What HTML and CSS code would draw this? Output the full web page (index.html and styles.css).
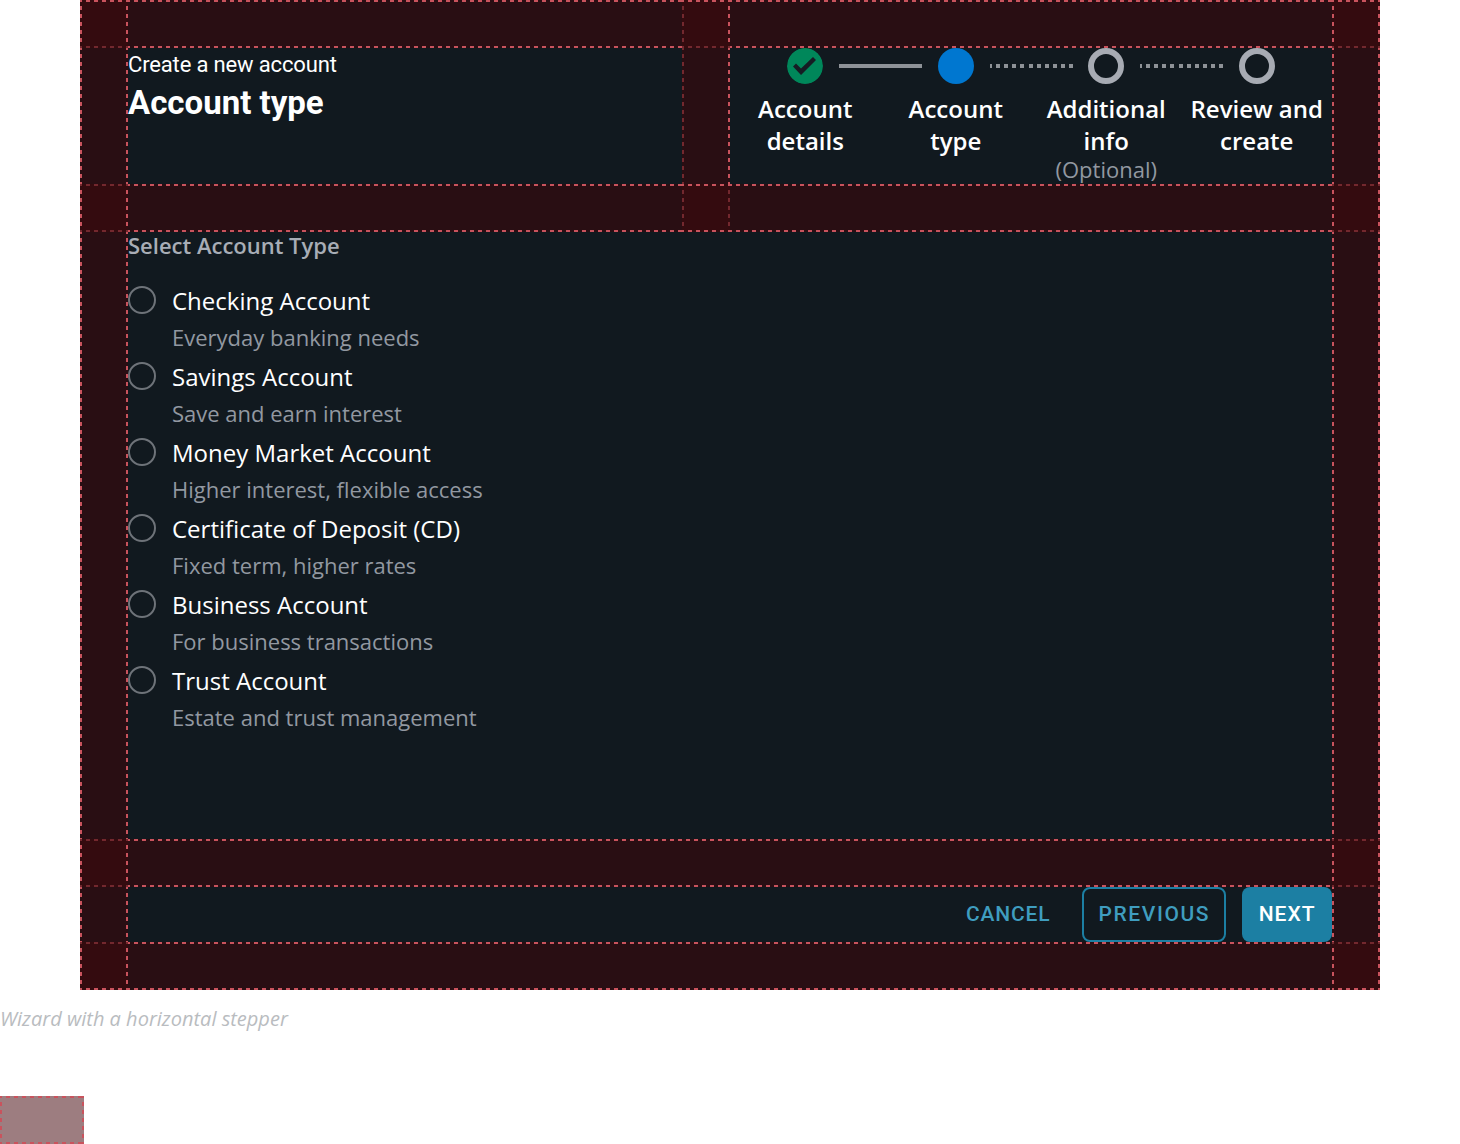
FILE: index.html
```html
<!DOCTYPE html>
<html lang="en">
<head>
<meta charset="utf-8">
<title>Wizard with a horizontal stepper</title>
<link rel="stylesheet" href="styles.css">
</head>
<body>
<figure class="specimen">
  <div class="wizard">
    <div class="corner dim-b"></div><div class="hband"></div><div class="corner dim-b dim-l"></div><div class="hband"></div><div class="corner dim-b"></div>

    <div class="vband"></div>
    <header class="cell heading">
      <p class="eyebrow">Create a new account</p>
      <h1 class="title">Account type</h1>
    </header>
    <div class="vband dim-l"></div>
    <ol class="cell stepper">
      <li class="step">
        <div class="track">
          <svg class="node" viewBox="0 0 36 36"><circle cx="18" cy="18" r="18" fill="#00875a"/><path d="M6 18.5l3-3 5 5L26 9l3 3L14 27z" fill="#161c24"/></svg>
          <span class="line solid"></span>
        </div>
        <span class="label">Account details</span>
      </li>
      <li class="step">
        <div class="track">
          <span class="node current"></span>
          <span class="line dotted"></span>
        </div>
        <span class="label">Account type</span>
      </li>
      <li class="step">
        <div class="track">
          <span class="node todo"></span>
          <span class="line dotted"></span>
        </div>
        <span class="label">Additional info</span>
        <span class="hint">(Optional)</span>
      </li>
      <li class="step">
        <div class="track">
          <span class="node todo"></span>
        </div>
        <span class="label">Review and create</span>
      </li>
    </ol>
    <div class="vband"></div>

    <div class="corner dim-t dim-b"></div><div class="hband"></div><div class="corner dim-l dim-r"></div><div class="hband"></div><div class="corner dim-t dim-b"></div>

    <div class="vband"></div>
    <main class="cell wide content">
      <p class="legend">Select Account Type</p>
      <ul class="options">
        <li class="option"><span class="radio"></span><div><div class="opt-name">Checking Account</div><div class="opt-desc">Everyday banking needs</div></div></li>
        <li class="option"><span class="radio"></span><div><div class="opt-name">Savings Account</div><div class="opt-desc">Save and earn interest</div></div></li>
        <li class="option"><span class="radio"></span><div><div class="opt-name">Money Market Account</div><div class="opt-desc">Higher interest, flexible access</div></div></li>
        <li class="option"><span class="radio"></span><div><div class="opt-name">Certificate of Deposit (CD)</div><div class="opt-desc">Fixed term, higher rates</div></div></li>
        <li class="option"><span class="radio"></span><div><div class="opt-name">Business Account</div><div class="opt-desc">For business transactions</div></div></li>
        <li class="option"><span class="radio"></span><div><div class="opt-name">Trust Account</div><div class="opt-desc">Estate and trust management</div></div></li>
      </ul>
    </main>
    <div class="vband"></div>

    <div class="corner dim-t dim-b"></div><div class="hband wide"></div><div class="corner dim-t dim-b"></div>

    <div class="vband"></div>
    <footer class="cell wide actions">
      <button class="btn ghost">Cancel</button>
      <button class="btn outline">Previous</button>
      <button class="btn primary">Next</button>
    </footer>
    <div class="vband"></div>

    <div class="corner dim-t"></div><div class="hband wide"></div><div class="corner dim-t"></div>
  </div>
  <figcaption class="caption">Wizard with a horizontal stepper</figcaption>
</figure>
<div class="swatch"></div>
</body>
</html>
```
FILE: styles.css
```css
* { box-sizing: border-box; }
html, body { margin: 0; padding: 0; background: #fff; }
body { font-family: "Open Sans", sans-serif; height: 1144px; overflow: hidden; }
.specimen { margin: 0; }
.wizard {
  width: 1300px;
  margin: 0 auto;
  display: grid;
  grid-template-columns: 48px 554px 48px 602px 48px;
  grid-template-rows: 48px 136px 48px 607px 48px 55px 48px;
  background: #11191f;
}

/* Spacing guides: 2px lines, 4px dash / 4px gap, starting on a half dash */
.hband, .vband, .corner, .swatch {
  --t: #c9535d; --b: #c9535d; --l: #c9535d; --r: #c9535d;
  --h-t: repeating-linear-gradient(90deg, var(--t) 0 2px, transparent 2px 6px, var(--t) 6px 8px);
  --h-b: repeating-linear-gradient(90deg, var(--b) 0 2px, transparent 2px 6px, var(--b) 6px 8px);
  --v-l: repeating-linear-gradient(180deg, var(--l) 0 2px, transparent 2px 6px, var(--l) 6px 8px);
  --v-r: repeating-linear-gradient(180deg, var(--r) 0 2px, transparent 2px 6px, var(--r) 6px 8px);
  background-repeat: no-repeat;
}
.hband {
  background-color: #290e13;
  background-image: var(--h-t), var(--h-b);
  background-size: 100% 2px;
  background-position: top, bottom;
}
.vband {
  background-color: #290e13;
  background-image: var(--v-l), var(--v-r);
  background-size: 2px 100%;
  background-position: left, right;
}
.corner, .swatch {
  background-color: #340b0f;
  background-image: var(--h-t), var(--h-b), var(--v-l), var(--v-r);
  background-size: 100% 2px, 100% 2px, 2px 100%, 2px 100%;
  background-position: top, bottom, left, right;
}
.dim-t { --t: #73282e; }
.dim-b { --b: #73282e; }
.dim-l { --l: #73282e; }
.dim-r { --r: #73282e; }
.wide { grid-column: span 3; }
.cell { min-width: 0; min-height: 0; }

.heading { color: #fff; }
.eyebrow { margin: 0; font: 400 22px/34px Roboto, sans-serif; letter-spacing: -0.15px; }
.title { margin: 0; font: 700 33px/42px Roboto, sans-serif; }

.stepper { list-style: none; margin: 0; padding: 0; display: grid; grid-template-columns: repeat(4, 150.5px); justify-content: start; }
.step { display: flex; flex-direction: column; align-items: center; text-align: center; color: #fff; }
.track { position: relative; width: 100%; height: 36px; display: flex; justify-content: center; }
.node { width: 36px; height: 36px; border-radius: 50%; display: block; flex: none; }
.current { background: #0077d0; }
.todo { border: 6px solid #a7abb3; }
.line { position: absolute; left: calc(50% + 34px); width: 83px; top: 16px; height: 4px; }
.solid { background: #8e9297; }
.dotted { background: repeating-linear-gradient(90deg, #8e9297 0 2px, transparent 2px 6.1px, #8e9297 6.1px 8.1px); }
.label { width: 140px; font-size: 24px; font-weight: 600; line-height: 32px; margin-top: 9px; }
.hint { font-size: 22px; line-height: 24px; color: #9298a1; }

.legend { margin: 0; font-size: 22px; line-height: 26px; font-weight: 600; color: #a8adb6; }
.options { list-style: none; margin: 25px 0 0; padding: 0; display: flex; flex-direction: column; }
.option { height: 76px; display: flex; gap: 16px; }
.radio { flex: none; width: 28px; height: 28px; margin-top: 3px; border: 2px solid #6e7379; border-radius: 50%; }
.opt-name { font-size: 24px; line-height: 36px; color: #fff; }
.opt-desc { font-size: 22px; line-height: 36px; color: #9298a1; }

.actions { display: flex; justify-content: flex-end; gap: 16px; align-items: stretch; }
.btn { font: 500 21px/1 Roboto, sans-serif; letter-spacing: 1px; text-transform: uppercase; border-radius: 8px; padding: 0 14px; border: 2px solid transparent; background: none; color: #3f9dbf; }
.ghost { letter-spacing: 0.85px; }
.outline { border-color: #1c7fa3; letter-spacing: 1.6px; }
.primary { background: #1c7fa3; color: #fff; padding: 0 14.5px; }

.caption { margin: 16px 0 0; font-size: 20px; line-height: 26px; font-style: italic; color: #b9bcc0; }
.swatch { width: 84px; height: 48px; margin-top: 64px; background-color: #9d7d80; }
```
